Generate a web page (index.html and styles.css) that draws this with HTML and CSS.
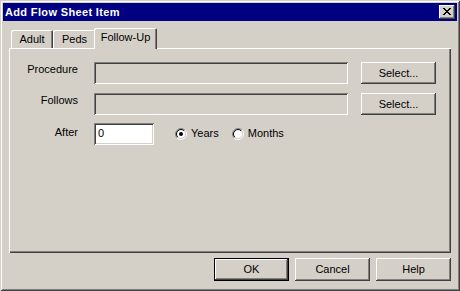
FILE: index.html
```html
<!DOCTYPE html>
<html>
<head>
<meta charset="utf-8">
<title>Add Flow Sheet Item</title>
<link rel="stylesheet" href="styles.css">
</head>
<body>
<div class="window">
  <div class="titlebar">
    <span class="title">Add Flow Sheet Item</span>
    <span class="close">
      <svg width="8" height="7" viewBox="0 0 8 7" shape-rendering="crispEdges">
        <rect x="0" y="0" width="2" height="1" fill="#000"/><rect x="6" y="0" width="2" height="1" fill="#000"/>
        <rect x="1" y="1" width="2" height="1" fill="#000"/><rect x="5" y="1" width="2" height="1" fill="#000"/>
        <rect x="2" y="2" width="4" height="1" fill="#000"/>
        <rect x="3" y="3" width="2" height="1" fill="#000"/>
        <rect x="2" y="4" width="4" height="1" fill="#000"/>
        <rect x="1" y="5" width="2" height="1" fill="#000"/><rect x="5" y="5" width="2" height="1" fill="#000"/>
        <rect x="0" y="6" width="2" height="1" fill="#000"/><rect x="6" y="6" width="2" height="1" fill="#000"/>
      </svg>
    </span>
  </div>
  <div class="content">
    <div class="tabs">
      <div class="tab tab-adult">Adult</div>
      <div class="tab tab-peds">Peds</div>
      <div class="tab tab-active">Follow-Up</div>
    </div>
    <div class="panel">
      <div class="row">
        <div class="label">Procedure</div>
        <div class="field field-disabled"></div>
        <div class="btn btn-select">Select...</div>
      </div>
      <div class="row row-follows">
        <div class="label">Follows</div>
        <div class="field field-disabled"></div>
        <div class="btn btn-select">Select...</div>
      </div>
      <div class="row row-after">
        <div class="label label-after">After</div>
        <div class="field field-input">0</div>
        <div class="radios">
          <span class="radio">
            <svg width="12" height="12" viewBox="0 0 12 12">
              <circle cx="6" cy="6" r="4.5" fill="#fff"/>
              <path d="M2.111 9.889 A5.5 5.5 0 0 1 9.889 2.111" fill="none" stroke="#808080" stroke-width="1"/>
              <path d="M9.889 2.111 A5.5 5.5 0 0 1 2.111 9.889" fill="none" stroke="#fff" stroke-width="1"/>
              <path d="M2.818 9.182 A4.5 4.5 0 0 1 9.182 2.818" fill="none" stroke="#000" stroke-width="1"/>
              <path d="M9.182 2.818 A4.5 4.5 0 0 1 2.818 9.182" fill="none" stroke="#d4d0c8" stroke-width="1"/>
              <circle cx="6" cy="6" r="2" fill="#000"/>
            </svg>
            <span class="radio-text">Years</span>
          </span>
          <span class="radio">
            <svg width="12" height="12" viewBox="0 0 12 12">
              <circle cx="6" cy="6" r="4.5" fill="#fff"/>
              <path d="M2.111 9.889 A5.5 5.5 0 0 1 9.889 2.111" fill="none" stroke="#808080" stroke-width="1"/>
              <path d="M9.889 2.111 A5.5 5.5 0 0 1 2.111 9.889" fill="none" stroke="#fff" stroke-width="1"/>
              <path d="M2.818 9.182 A4.5 4.5 0 0 1 9.182 2.818" fill="none" stroke="#000" stroke-width="1"/>
              <path d="M9.182 2.818 A4.5 4.5 0 0 1 2.818 9.182" fill="none" stroke="#d4d0c8" stroke-width="1"/>
            </svg>
            <span class="radio-text">Months</span>
          </span>
        </div>
      </div>
    </div>
    <div class="actions">
      <div class="btn btn-action btn-default">OK</div>
      <div class="btn btn-action">Cancel</div>
      <div class="btn btn-action">Help</div>
    </div>
  </div>
</div>
</body>
</html>
```

FILE: styles.css
```css
html, body {
  margin: 0;
  padding: 0;
}
body {
  width: 460px;
  height: 291px;
  overflow: hidden;
  background: #d4d0c8;
  font-family: "Liberation Sans", Arial, sans-serif;
  font-size: 11px;
  line-height: 13px;
  color: #000;
}
.window {
  box-sizing: border-box;
  width: 460px;
  height: 291px;
  padding: 3px;
  display: flex;
  flex-direction: column;
  background: #d4d0c8;
  box-shadow: inset 1px 1px #d4d0c8, inset -1px -1px #404040, inset 2px 2px #fff, inset -2px -2px #808080;
}
.titlebar {
  height: 18px;
  background: #000080;
  display: flex;
  align-items: center;
  justify-content: space-between;
  padding: 0 2px;
}
.title {
  color: #fff;
  font-weight: bold;
  font-size: 11px;
  letter-spacing: 0.35px;
}
.close {
  box-sizing: border-box;
  width: 16px;
  height: 14px;
  background: #d4d0c8;
  box-shadow: inset -1px -1px #404040, inset 1px 1px #fff, inset -2px -2px #808080;
  display: flex;
  padding: 3px 0 0 4px;
}
.close svg {
  display: block;
}
.content {
  flex: 1;
  display: flex;
  flex-direction: column;
  padding: 7px 6px 0 6px;
}
.tabs {
  height: 20px;
  display: flex;
  align-items: flex-end;
  padding-left: 2px;
}
.tab {
  box-sizing: border-box;
  height: 18px;
  padding-top: 3px;
  text-align: center;
  background: #d4d0c8;
  box-shadow: inset 1px 1px #fff, inset -1px 0 #404040, inset -2px 0 #808080;
  border-radius: 2px 2px 0 0;
}
.tab-adult {
  width: 42px;
}
.tab-peds {
  width: 43px;
  margin-right: -2px;
}
.tab-active {
  width: 63px;
  height: 21px;
  margin-bottom: -1px;
  z-index: 2;
}
.panel {
  box-sizing: border-box;
  height: 205px;
  padding-top: 14px;
  box-shadow: inset 1px 1px #fff, inset -1px -1px #404040, inset -2px -2px #808080;
}
.row {
  display: flex;
  align-items: flex-start;
  height: 22px;
}
.row-follows {
  margin-top: 9px;
}
.row-after {
  margin-top: 8px;
}
.label {
  width: 69px;
  margin-right: 16px;
  text-align: right;
  margin-top: 1px;
}
.label-after {
  margin-top: 3px;
}
.field {
  box-sizing: border-box;
  height: 22px;
  box-shadow: inset 1px 1px #808080, inset -1px -1px #fff, inset 2px 2px #404040, inset -2px -2px #d4d0c8;
}
.field-disabled {
  width: 254px;
  background: #d4d0c8;
}
.field-input {
  width: 60px;
  background: #fff;
  padding: 4px 0 0 4px;
}
.btn {
  box-sizing: border-box;
  display: flex;
  align-items: center;
  justify-content: center;
  background: #d4d0c8;
  box-shadow: inset -1px -1px #404040, inset 1px 1px #fff, inset -2px -2px #808080;
}
.btn-select {
  width: 75px;
  height: 22px;
  margin-left: 13px;
}
.radios {
  display: flex;
  align-items: center;
  margin-left: 21px;
  margin-top: 4px;
}
.radio {
  display: flex;
  align-items: center;
}
.radio svg {
  display: block;
}
.radio-text {
  margin-left: 4px;
}
.radio + .radio {
  margin-left: 13px;
}
.actions {
  display: flex;
  justify-content: flex-end;
  gap: 6px;
  margin-top: 5px;
}
.btn-action {
  width: 75px;
  height: 23px;
}
.btn-default {
  box-shadow: inset 0 0 0 1px #000, inset -2px -2px #404040, inset 2px 2px #fff, inset -3px -3px #808080;
}
```
